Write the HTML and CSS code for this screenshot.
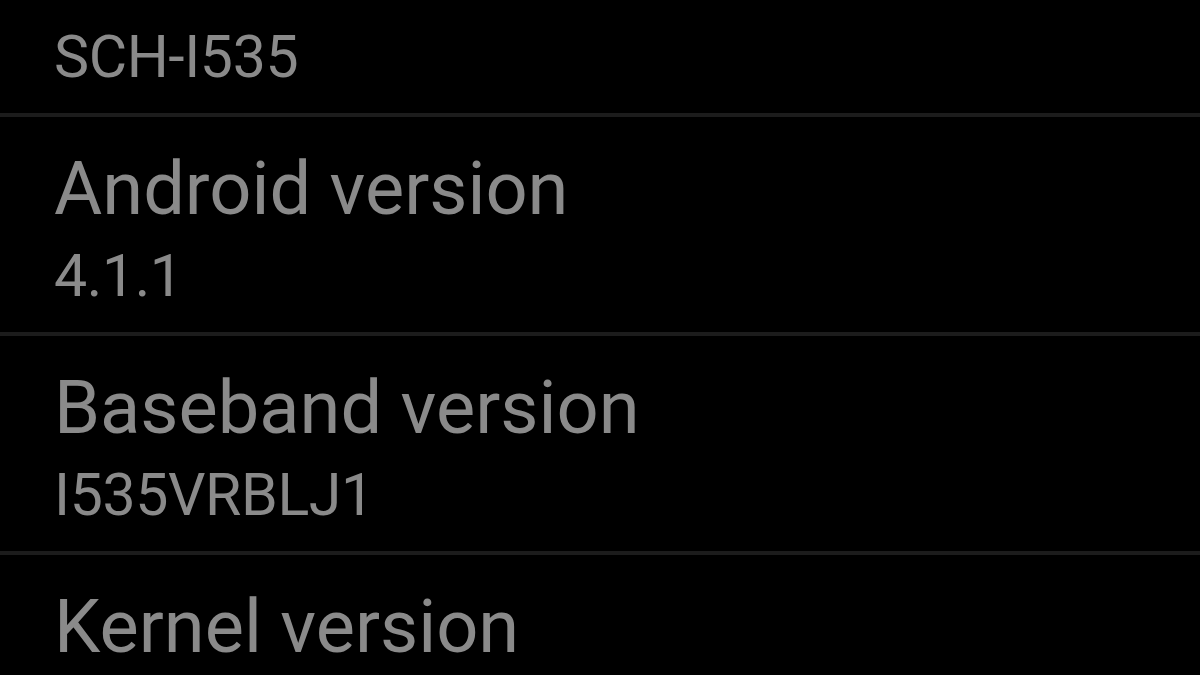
FILE: index.html
```html
<!DOCTYPE html>
<html lang="en">
<head>
  <meta charset="UTF-8">
  <title>About phone</title>
  <link rel="stylesheet" href="styles.css">
</head>
<body>

  <ul class="prefs">
    <li class="pref cont">
      <div class="summary">SCH-I535</div>
    </li>
    <li class="pref">
      <div class="title">Android version</div>
      <div class="summary">4.1.1</div>
    </li>
    <li class="pref">
      <div class="title">Baseband version</div>
      <div class="summary">I535VRBLJ1</div>
    </li>
    <li class="pref">
      <div class="title">Kernel version</div>
    </li>
  </ul>

</body>
</html>
```

FILE: styles.css
```css
html, body {
  background-color: #000;
}
body {
  margin: 0;
  font-family: Roboto, "Liberation Sans", sans-serif;
  color: #8a8a8a;
  overflow: hidden;
}
.prefs {
  list-style: none;
  margin: 0;
  padding: 0;
}
.pref {
  display: flex;
  flex-direction: column;
  padding: 28px 0 21px 54px;
  border-bottom: 4px solid #1c1c1c;
}
.pref.cont {
  padding-top: 14px;
}
.title {
  font-size: 74px;
  line-height: 88px;
}
.summary {
  margin-top: 8px;
  font-size: 59px;
  line-height: 70px;
  letter-spacing: -0.4px;
}
```
